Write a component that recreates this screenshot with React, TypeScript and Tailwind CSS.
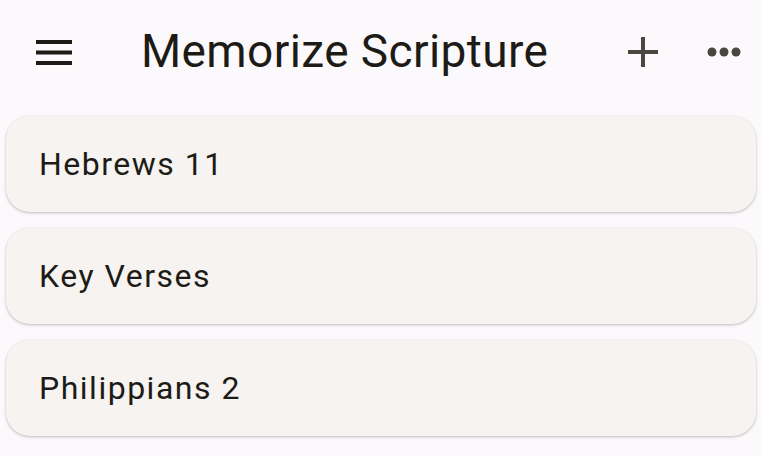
import React from "react";

const items = ["Hebrews 11", "Key Verses", "Philippians 2"];

export default function App() {
  return (
    <div className="w-[762px] h-[456px] bg-[#fcf9fc] overflow-hidden" style={{ fontFamily: "Roboto, 'Noto Sans', sans-serif" }}>
      <header className="h-[104px] flex items-center">
        <div className="w-[108px] flex justify-center">
          <svg width="36" height="28" viewBox="0 0 36 28">
            <rect x="0" y="2" width="36" height="4" fill="#1d1b16" />
            <rect x="0" y="12.5" width="36" height="4" fill="#1d1b16" />
            <rect x="0" y="23" width="36" height="4" fill="#1d1b16" />
          </svg>
        </div>
        <h1 className="ml-[33px] text-[46px] leading-none text-[#1d1b16] tracking-[0.4px] pb-[2px]">Memorize Scripture</h1>
        <div className="ml-auto flex items-center">
          <svg width="30" height="30" viewBox="0 0 30 30" className="mr-[49px]">
            <rect x="13" y="0" width="4" height="30" fill="#4a4740" />
            <rect x="0" y="13" width="30" height="4" fill="#4a4740" />
          </svg>
          <svg width="34" height="10" viewBox="0 0 34 10" className="mr-[21px]">
            <circle cx="5" cy="5" r="4.5" fill="#4a4740" />
            <circle cx="17" cy="5" r="4.5" fill="#4a4740" />
            <circle cx="29" cy="5" r="4.5" fill="#4a4740" />
          </svg>
        </div>
      </header>
      <div className="flex flex-col gap-[16px] px-[6px] pt-[12px]">
        {items.map((t) => (
          <div key={t} className="h-[96px] rounded-[24px] bg-[#f6f3f1] shadow-[0_1px_3px_rgba(0,0,0,0.25)] flex items-center pl-[33px]">
            <span className="text-[32px] leading-none text-[#1d1b16] tracking-[1.5px]">{t}</span>
          </div>
        ))}
      </div>
    </div>
  );
}
